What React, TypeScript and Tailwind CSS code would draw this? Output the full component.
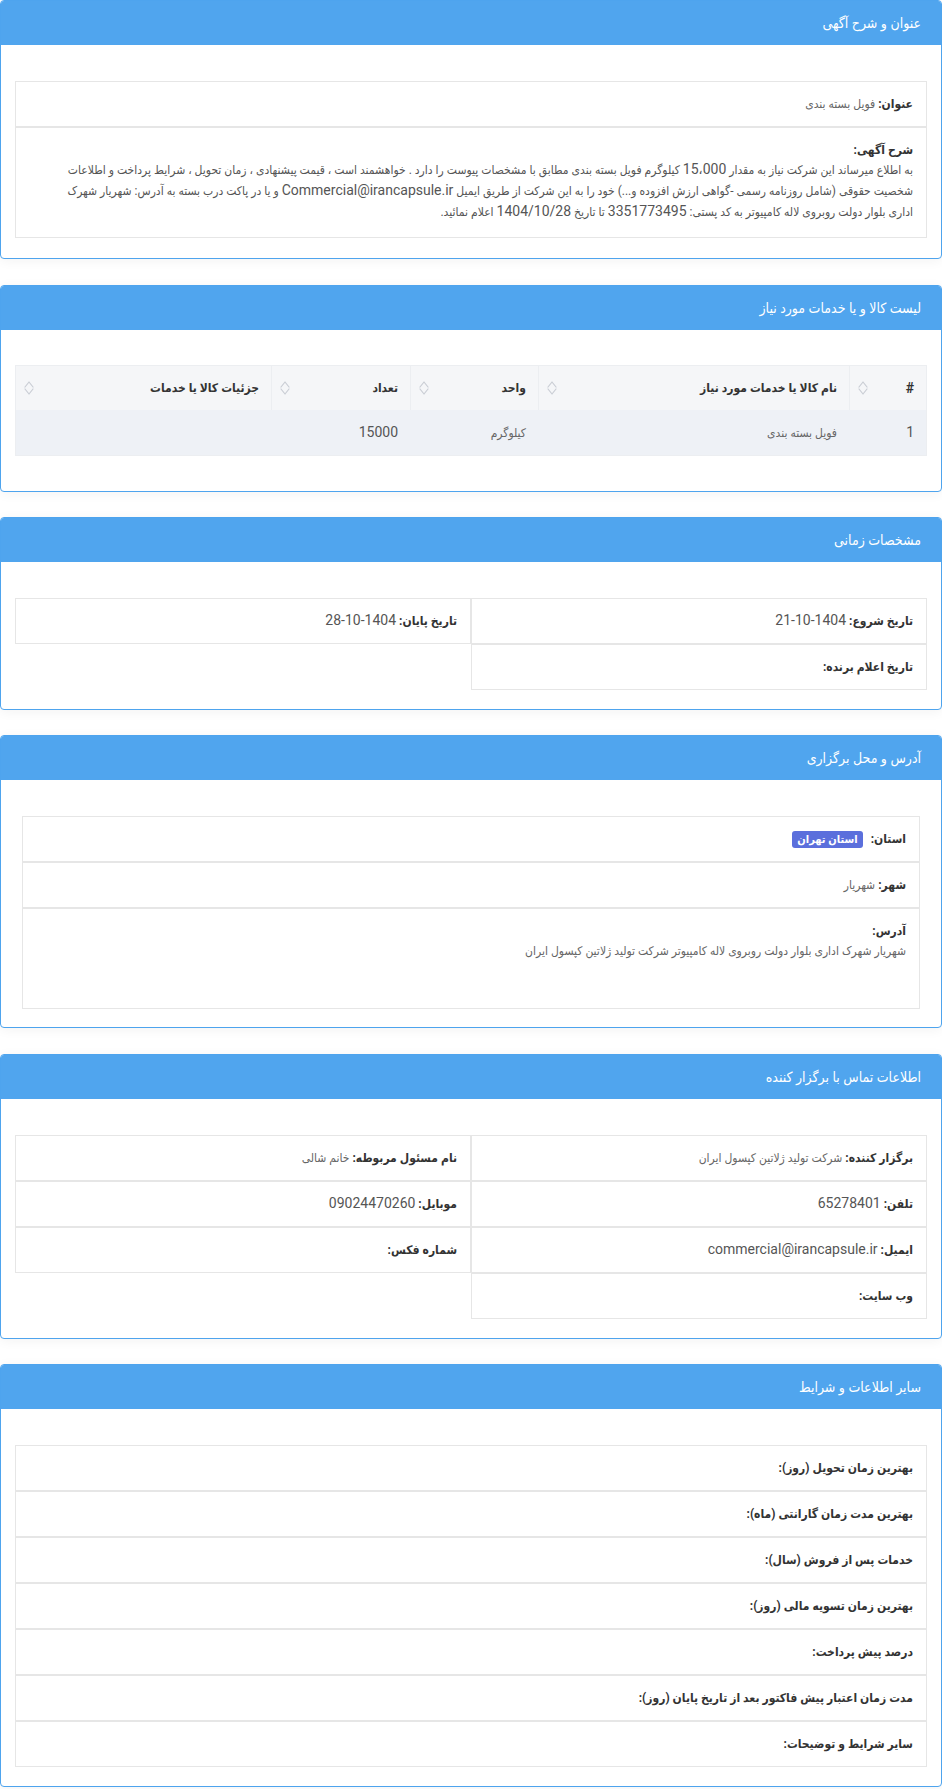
import React from "react";

const SortIcon = () => (
  <svg width="10" height="16" viewBox="0 0 10 16" fill="none" stroke="#c9cdd4" strokeWidth="1.2" strokeLinejoin="round" strokeLinecap="round" className="shrink-0">
    <path d="M1 7 L5 2 L9 7" />
    <path d="M1 9 L5 14 L9 9" />
  </svg>
);

const Card = ({ title, children, bodyClass, mb = "mb-[25px]" }: { title: string; children: React.ReactNode; bodyClass: string; mb?: string }) => (
  <section className={"rounded-[4px] border border-[#4ea4ee] bg-white shadow-[0_2px_12px_rgba(0,0,0,0.05)] " + mb}>
    <div className="flex h-[44px] items-center rounded-t-[3px] bg-[#50a5ee] px-5 text-[14px] text-white">{title}</div>
    <div className={bodyClass}>{children}</div>
  </section>
);

const Row = ({ children, className = "" }: { children: React.ReactNode; className?: string }) => (
  <div className={"border border-[#e6e6e6] px-[13px] py-3 leading-5 " + className}>{children}</div>
);

const L = ({ children }: { children: React.ReactNode }) => <b className="font-bold text-[#333]">{children}</b>;
const V = ({ children }: { children: React.ReactNode }) => <span className="text-[#666]">{children}</span>;
const N = ({ children, size = "text-[14px]" }: { children: React.ReactNode; size?: string }) => (
  <span className={size + " leading-none text-[#555]"}>{children}</span>
);

export default function App() {
  return (
    <div dir="rtl" className="min-h-[1789px] bg-white font-[Roboto,'DejaVu_Sans_Condensed','DejaVu_Sans',sans-serif] text-[12px] text-[#555]">
      <Card title="عنوان و شرح آگهی" bodyClass="px-[14px] pt-9 pb-5" mb="mb-[26px]">
        <div>
          <Row>
            <L>عنوان:</L> <V>فویل بسته بندی</V>
          </Row>
          <div className="border border-[#e6e6e6] px-[13px] pt-3 pb-[14px]">
            <div className="leading-5"><L>شرح آگهی:</L></div>
            <p className="leading-[21px] text-[#555]">
              به اطلاع میرساند این شرکت نیاز به مقدار <N>15،000</N> کیلوگرم فویل بسته بندی مطابق با مشخصات پیوست را دارد . خواهشمند است ، قیمت پیشنهادی ، زمان تحویل ، شرایط پرداخت و اطلاعات
              <br />
              شخصیت حقوقی (شامل روزنامه رسمی -گواهی ارزش افزوده و...) خود را به این شرکت از طریق ایمیل <N>Commercial@irancapsule.ir</N> و یا در پاکت درب بسته به آدرس: شهریار شهرک
              <br />
              اداری بلوار دولت روبروی لاله کامپیوتر به کد پستی: <N>3351773495</N> تا تاریخ <N>1404/10/28</N> اعلام نمائید.
            </p>
          </div>
        </div>
      </Card>

      <Card title="لیست کالا و یا خدمات مورد نیاز" bodyClass="px-[14px] pt-[35px] pb-[35px]">
        <div className="border border-[#eceef1]">
          <div className="grid h-[44px] grid-cols-[77px_311px_128px_139px_1fr] bg-[#f5f6f8] font-bold text-[#333]">
            {["#", "نام کالا یا خدمات مورد نیاز", "واحد", "تعداد", "جزئیات کالا یا خدمات"].map((h, i) => (
              <div key={i} className={"flex items-center justify-between pr-3 pl-2 " + (i < 4 ? "border-l border-[#eceef1]" : "")}>
                <span className={i === 0 ? "text-[14px]" : ""}>{h}</span>
                <SortIcon />
              </div>
            ))}
          </div>
          <div className="grid h-[45px] grid-cols-[77px_311px_128px_139px_1fr] items-center bg-[#eef1f6] text-[#555]">
            <div className="pr-3 text-[14px]">1</div>
            <div className="pr-3 text-[#666]">فویل بسته بندی</div>
            <div className="pr-3 text-[#666]">کیلوگرم</div>
            <div className="pr-3 text-[14px]">15000</div>
            <div className="pr-3"></div>
          </div>
        </div>
      </Card>

      <Card title="مشخصات زمانی" bodyClass="px-[14px] pt-9 pb-[19px]">
        <div className="grid grid-cols-2">
          <Row><L>تاریخ شروع:</L> <N>1404-10-21</N></Row>
          <Row><L>تاریخ پایان:</L> <N>1404-10-28</N></Row>
          <Row><L>تاریخ اعلام برنده:</L></Row>
        </div>
      </Card>

      <Card title="آدرس و محل برگزاری" bodyClass="px-[21px] pt-9 pb-[18px]" mb="mb-[26px]">
        <div>
          <Row className="flex items-center">
            <L>استان:</L>
            <span className="mr-2 rounded-[3px] bg-[#5b6fdc] px-[5px] py-[1px] text-[11px] font-bold leading-[15px] text-white">استان تهران</span>
          </Row>
          <Row><L>شهر:</L> <V>شهریار</V></Row>
          <div className="h-[101px] border border-[#e6e6e6] px-[13px] pt-3 leading-5">
            <div><L>آدرس:</L></div>
            <div className="text-[#666]">شهریار شهرک اداری بلوار دولت روبروی لاله کامپیوتر شرکت تولید ژلاتین کپسول ایران</div>
          </div>
        </div>
      </Card>

      <Card title="اطلاعات تماس با برگزار کننده" bodyClass="px-[14px] pt-9 pb-[19px]">
        <div className="grid grid-cols-2">
          <Row><L>برگزار کننده:</L> <V>شرکت تولید ژلاتین کپسول ایران</V></Row>
          <Row><L>نام مسئول مربوطه:</L> <V>خانم شالی</V></Row>
          <Row><L>تلفن:</L> <N>65278401</N></Row>
          <Row><L>موبایل:</L> <N>09024470260</N></Row>
          <Row><L>ایمیل:</L> <N>commercial@irancapsule.ir</N></Row>
          <Row><L>شماره فکس:</L></Row>
          <Row><L>وب سایت:</L></Row>
        </div>
      </Card>

      <Card title="سایر اطلاعات و شرایط" bodyClass="px-[14px] pt-9 pb-[19px]" mb="mb-0">
        <div>
          {[
            "بهترین زمان تحویل (روز):",
            "بهترین مدت زمان گارانتی (ماه):",
            "خدمات پس از فروش (سال):",
            "بهترین زمان تسویه مالی (روز):",
            "درصد پیش پرداخت:",
            "مدت زمان اعتبار پیش فاکتور بعد از تاریخ پایان (روز):",
            "سایر شرایط و توضیحات:",
          ].map((t) => (
            <Row key={t}><L>{t}</L></Row>
          ))}
        </div>
      </Card>
    </div>
  );
}
